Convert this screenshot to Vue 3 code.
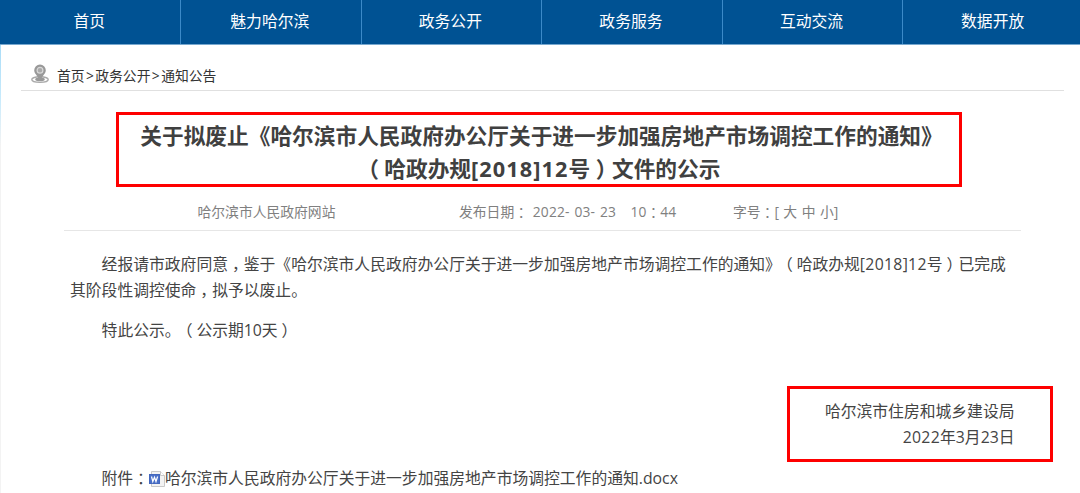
<template>
  <div class="page">
    <nav class="nav">
      <a v-for="item in navItems" :key="item" class="nav-item">{{ item }}</a>
    </nav>

    <main class="content">
      <!-- Breadcrumb -->
      <div class="breadcrumb">
        <svg class="pin" width="20" height="20" viewBox="0 0 20 20">
          <ellipse cx="10" cy="15.6" rx="8.2" ry="2.8" fill="none" stroke="#aaa" stroke-width="1.4" />
          <ellipse cx="10" cy="15.4" rx="4.8" ry="1.8" fill="#999" />
          <path
            d="M10 .5a5.8 5.8 0 0 0-5.8 5.8c0 3.6 3.6 5.400 5.100 9.700h1.400c1.500-4.300 5.100-6.100 5.100-9.700A5.800 5.800 0 0 0 10 .5z"
            fill="#999"
          />
          <circle cx="10" cy="6.200" r="2.900" fill="#aaa" stroke="#d8d8d8" stroke-width="1.200" />
        </svg>
        <span>首页<i class="sep">&gt;</i>政务公开<i class="sep">&gt;</i>通知公告</span>
      </div>

      <!-- Title -->
      <h1 class="title">
        关于拟废止《哈尔滨市人民政府办公厅关于进一步加强房地产市场调控工作的通知》<br />
        <span class="punct">（</span>哈政办规<span class="num">[2018]12</span>号<span class="punct">）</span>文件的公示
      </h1>

      <div class="meta">
        <span class="source">哈尔滨市人民政府网站</span>
        <span class="date">发布日期<span class="punct">：</span><span class="time"> 2022- 03- 23 &nbsp; 10</span><span class="punct">：</span>44</span>
        <span class="size">字号<span class="punct">：</span>[ 大 中 小]</span>
      </div>

      <!-- Body -->
      <article class="article">
        <p>
          经报请市政府同意<span class="punct">，</span>鉴于《哈尔滨市人民政府办公厅关于进一步加强房地产市场调控工作的通知》<span class="punct">（</span>哈政办规<span class="num">[2018]12</span>号<span class="punct">）</span>已完成<br />其阶段性调控使命<span class="punct">，</span>拟予以废止。
        </p>
        <p>特此公示。<span class="punct">（</span>公示期10天<span class="punct">）</span></p>
      </article>

      <div class="signature">
        <div>哈尔滨市住房和城乡建设局</div>
        <div><span class="num">2022</span>年3月23日</div>
      </div>

      <div class="attachment">
        <span>附件<span class="punct">：</span></span>
        <svg class="doc" width="16" height="16" viewBox="0 0 16 16">
          <path d="M2.500.5h9l4 4v11h-13z" fill="#f3f3f3" stroke="#c9c9c9" />
          <path d="M11.500.5v4h4" fill="#fff" stroke="#c9c9c9" />
          <rect x=".5" y="3.500" width="10" height="9" fill="#4a70c8" stroke="#4467bd" />
          <path d="M2.500 5.500l1.300 5 1.700-4.300 1.500 4.300 1.600-5" fill="none" stroke="#fff" stroke-width="1.200" />
        </svg>
        <a>哈尔滨市人民政府办公厅关于进一步加强房地产市场调控工作的通知.docx</a>
      </div>
    </main>
  </div>
</template>

<script setup>
const navItems = ['首页', '魅力哈尔滨', '政务公开', '政务服务', '互动交流', '数据开放']
</script>

<style>
body {
  margin: 0;
  background: #fff;
  overflow: hidden;
}
</style>

<style scoped>
.page {
  width: 1080px;
  height: 493px;
  overflow: hidden;
  background: #fff;
  color: #444;
  font-family: "Open Sans", "Noto Sans CJK SC", sans-serif;
  font-size: 15.8px;
  text-spacing-trim: space-all;
  white-space: nowrap;
}

.nav {
  display: flex;
  height: 44px;
  padding-left: 0.4px;
  background: #005293;
  border-bottom: 1px solid #77a8cf;
}

.nav-item {
  box-sizing: border-box;
  flex: 0 0 180.6px;
  padding-right: 2px;
  border-right: 1px solid #3c8ac8;
  color: #fff;
  line-height: 42px;
  text-align: center;
}

.nav-item:last-child {
  border-right: none;
}

.content {
  height: 448px;
  background: linear-gradient(#a9dcf7, #c9ebfc 55px, #f3f3f3 100px) left / 1px 100% no-repeat;
}

.breadcrumb {
  display: flex;
  align-items: center;
  box-sizing: border-box;
  width: 1043px;
  height: 46px;
  margin-left: 21px;
  padding: 15px 0 0 9px;
  border-bottom: 1px solid #e0e0e0;
  color: #333;
  font-size: 13.8px;
}

.pin {
  margin: -3px 7px 0 0;
}

.sep {
  margin: 0 1.4px;
  font-style: normal;
}

.title {
  box-sizing: border-box;
  width: 846px;
  height: 75px;
  margin: 21px 0 0 115.5px;
  padding: 5px 0 0 6px;
  border: 3px solid #fe0000;
  color: #404040;
  font-size: 21.7px;
  font-weight: 700;
  line-height: 32.5px;
  text-align: center;
}

/* full-width punctuation centred in its cell */
.punct {
  margin: 0 0.25em;
  font-family: "Noto Sans CJK SC", sans-serif;
  font-feature-settings: "halt";
  line-height: 1;
}

.num {
  letter-spacing: 0.3px;
}

.title .num {
  letter-spacing: 1.1px;
}

.meta {
  display: flex;
  box-sizing: border-box;
  width: 957px;
  height: 44px;
  margin-left: 64px;
  padding-left: 133.5px;
  border-bottom: 1px solid #e6e6e6;
  color: #808080;
  font-size: 13.8px;
  line-height: 50px;
}

.source {
  width: 261.5px;
}

.date {
  width: 274px;
}

.time {
  letter-spacing: 0.15px;
  word-spacing: 1.1px;
}

.size {
  word-spacing: 0.9px;
}

.article {
  margin-left: 70px;
  padding-top: 20px;
  line-height: 26px;
}

.article p {
  margin: 0 0 14px;
  text-indent: 2em;
}

.signature {
  box-sizing: border-box;
  width: 266px;
  height: 76px;
  margin: 43px 0 0 786.5px;
  padding: 9px 35px 0 0;
  border: 3px solid #fe0000;
  line-height: 26px;
  text-align: right;
}

.attachment {
  display: flex;
  align-items: center;
  height: 26px;
  margin: 2px 0 0 101.5px;
}

.doc {
  margin-top: 4px;
}
</style>
